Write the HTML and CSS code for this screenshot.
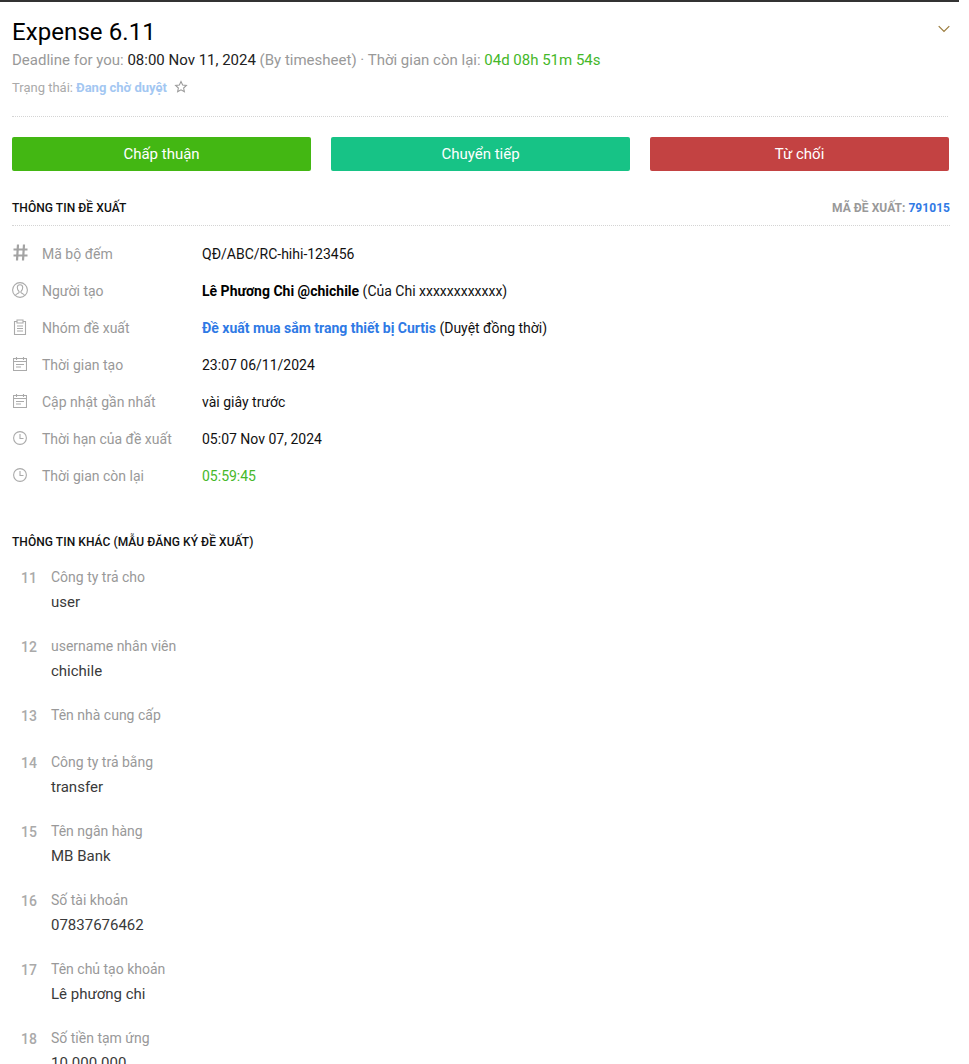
FILE: index.html
```html
<!DOCTYPE html>
<html lang="vi">
<head>
<meta charset="utf-8">
<title>Expense 6.11</title>
<link rel="stylesheet" href="styles.css">
</head>
<body>
<main class="page">
  <header class="head">
    <div class="head-main">
      <h1 class="title">Expense 6.11</h1>
      <p class="deadline">Deadline for you: <span class="dark">08:00 Nov 11, 2024</span> (By timesheet) · Thời gian còn lại: <span class="green">04d 08h 51m 54s</span></p>
      <p class="status">Trạng thái: <b class="pending">Đang chờ duyệt</b>
        <svg class="star" viewBox="0 0 24 24" width="14" height="14"><path d="M12 2.500l2.800 6 6.500.8-4.800 4.400 1.300 6.400-5.800-3.200-5.800 3.200 1.300-6.400-4.800-4.400 6.500-.8z"/></svg>
      </p>
    </div>
    <svg class="chevron" viewBox="0 0 12 8" width="12" height="8"><path d="M.7 1.200L6 6.500l5.300-5.300"/></svg>
  </header>

  <div class="actions">
    <button class="btn approve">Chấp thuận</button>
    <button class="btn forward">Chuyển tiếp</button>
    <button class="btn reject">Từ chối</button>
  </div>

  <div class="section-head">
    <h2 class="section-title">THÔNG TIN ĐỀ XUẤT</h2>
    <span class="code">MÃ ĐỀ XUẤT: <span class="blue">791015</span></span>
  </div>

  <div class="info">
    <div class="row">
      <span class="ico-box"><svg class="ico thick" viewBox="0 0 15 17" width="15" height="17"><path d="M5 .5L4 16.500M11 .5l-1 16M.5 5.500h14M.5 11.500h14"/></svg></span>
      <span class="label">Mã bộ đếm</span><span class="value">QĐ/ABC/RC-hihi-123456</span>
    </div>
    <div class="row">
      <span class="ico-box"><svg class="ico" viewBox="0 0 16 16" width="16" height="16"><circle cx="8" cy="8" r="7.400"/><path d="M3.300 13.600c.6-1.800 2.700-2 3.700-2.900.3-.5.2-1-.2-1.500C6 8.300 5.300 7 5.300 5.600 5.300 3.900 6.500 2.700 8 2.700s2.700 1.200 2.700 2.900c0 1.400-.7 2.700-1.500 3.600-.4.500-.5 1-.2 1.500 1 .9 3.100 1.100 3.700 2.900"/></svg></span>
      <span class="label">Người tạo</span><span class="value"><b class="name">Lê Phương Chi @chichile</b> (Của Chi xxxxxxxxxxxx)</span>
    </div>
    <div class="row">
      <span class="ico-box"><svg class="ico" viewBox="0 0 14 16" width="14" height="16"><path d="M4 2.500H1.500v13h11v-13H10M4 1h6v3H4zM4 7h6M4 9.500h6M4 12h6"/></svg></span>
      <span class="label">Nhóm đề xuất</span><span class="value"><b class="blue">Đề xuất mua sắm trang thiết bị Curtis</b> (Duyệt đồng thời)</span>
    </div>
    <div class="row">
      <span class="ico-box"><svg class="ico" viewBox="0 0 14 14" width="14" height="14"><path d="M.5 1.500h13v12H.5zM.5 4.500h13M3.500 0v3M10.500 0v3M3 7.500h8M3 10h5"/></svg></span>
      <span class="label">Thời gian tạo</span><span class="value">23:07 06/11/2024</span>
    </div>
    <div class="row">
      <span class="ico-box"><svg class="ico" viewBox="0 0 14 14" width="14" height="14"><path d="M.5 1.500h13v12H.5zM.5 4.500h13M3.500 0v3M10.500 0v3M3 7.500h8M3 10h5"/></svg></span>
      <span class="label">Cập nhật gần nhất</span><span class="value">vài giây trước</span>
    </div>
    <div class="row">
      <span class="ico-box"><svg class="ico" viewBox="0 0 14 14" width="14" height="14"><circle cx="7" cy="7" r="6.400"/><path d="M7 3v4.500h3.500"/></svg></span>
      <span class="label">Thời hạn của đề xuất</span><span class="value">05:07 Nov 07, 2024</span>
    </div>
    <div class="row">
      <span class="ico-box"><svg class="ico" viewBox="0 0 14 14" width="14" height="14"><circle cx="7" cy="7" r="6.400"/><path d="M7 3v4.500h3.500"/></svg></span>
      <span class="label">Thời gian còn lại</span><span class="value remaining">05:59:45</span>
    </div>
  </div>

  <h2 class="other-title">THÔNG TIN KHÁC (MẪU ĐĂNG KÝ ĐỀ XUẤT)</h2>

  <div class="fields">
    <div class="field"><span class="num">11</span><div class="field-body"><div class="f-label">Công ty trả cho</div><div class="f-value">user</div></div></div>
    <div class="field"><span class="num">12</span><div class="field-body"><div class="f-label">username nhân viên</div><div class="f-value">chichile</div></div></div>
    <div class="field"><span class="num">13</span><div class="field-body"><div class="f-label">Tên nhà cung cấp</div></div></div>
    <div class="field"><span class="num">14</span><div class="field-body"><div class="f-label">Công ty trả bằng</div><div class="f-value">transfer</div></div></div>
    <div class="field"><span class="num">15</span><div class="field-body"><div class="f-label">Tên ngân hàng</div><div class="f-value">MB Bank</div></div></div>
    <div class="field"><span class="num">16</span><div class="field-body"><div class="f-label">Số tài khoản</div><div class="f-value">07837676462</div></div></div>
    <div class="field"><span class="num">17</span><div class="field-body"><div class="f-label">Tên chủ tạo khoản</div><div class="f-value">Lê phương chi</div></div></div>
    <div class="field"><span class="num">18</span><div class="field-body"><div class="f-label">Số tiền tạm ứng</div><div class="f-value">10.000.000</div></div></div>
  </div>
</main>
</body>
</html>
```
FILE: styles.css
```css
* { box-sizing: border-box; }
html, body { margin: 0; height: 1064px; overflow: hidden; background: #fff; }
body { font-family: Roboto, "Noto Sans", sans-serif; color: #000; }
.page { width: 959px; height: 1064px; overflow: hidden; border-top: 2px solid #333; padding: 0 9px 0 12px; }

.head { display: flex; justify-content: space-between; align-items: flex-start; height: 115px; border-bottom: 1px dotted #d4d4d4; margin-right: 2px; }
.title { margin: 16px 0 0; font-size: 24px; font-weight: 400; line-height: 28px; letter-spacing: .08px; color: #000; }
.deadline { margin: 6px 0 0; font-size: 15px; line-height: 16px; color: #999; }
.dark { color: #222; }
.green { color: #45b82a; }
.status { display: flex; align-items: center; margin: 12px 0 0; font-size: 13px; line-height: 16px; color: #aaa; gap: 3px; }
.pending { color: #a3c7f2; font-weight: 700; }
.star { margin: -2px 0 0 4px; fill: none; stroke: #999; stroke-width: 1.800; }
.chevron { margin: 23px -2px 0 0; fill: none; stroke: #9a7b3c; stroke-width: 1.200; flex: none; }

.actions { display: grid; grid-template-columns: repeat(3, 299px); column-gap: 20px; margin-top: 20px; }
.btn { height: 34px; border: 0; border-radius: 2px; color: #fff; font: 400 15px Roboto, sans-serif; padding: 0; }
.approve { background: #43b713; }
.forward { background: #17c386; }
.reject { background: #c34242; }

.section-head { display: flex; justify-content: space-between; align-items: center; height: 55px; padding-top: 19px; border-bottom: 1px dotted #d4d4d4; }
.section-title, .other-title { margin: 0; font-size: 12px; font-weight: 500; line-height: 16px; letter-spacing: .06px; color: #111; }
.code { font-size: 12px; font-weight: 700; letter-spacing: .04px; color: #999; }
.blue { color: #2f7ae5; }

.info { padding-top: 9px; }
.row { display: flex; align-items: center; height: 37px; font-size: 14px; }
.ico-box { display: flex; justify-content: center; width: 16px; flex: none; }
.ico { fill: none; stroke: #aaa; stroke-width: 1.100; margin-top: -2px; }
.ico.thick { stroke: #a3a3a3; stroke-width: 2.200; }
.label { width: 160px; margin-left: 14px; color: #999; flex: none; }
.value { color: #111; font-size: 14px; }
.name { color: #000; }
.remaining { color: #45b82a; }

.other-title { margin-top: 40px; }

.fields { margin-top: 16px; }
.field { display: flex; padding-left: 9px; margin-bottom: 22px; }
.num { width: 30px; flex: none; font-size: 14px; font-weight: 500; line-height: 22px; color: #aaa; padding-top: 1px; }
.field-body { min-height: 25px; }
.f-label { font-size: 14px; line-height: 22px; color: #999; }
.f-value { font-size: 15px; line-height: 22px; margin-top: 3px; color: #3a3a3a; }
```
